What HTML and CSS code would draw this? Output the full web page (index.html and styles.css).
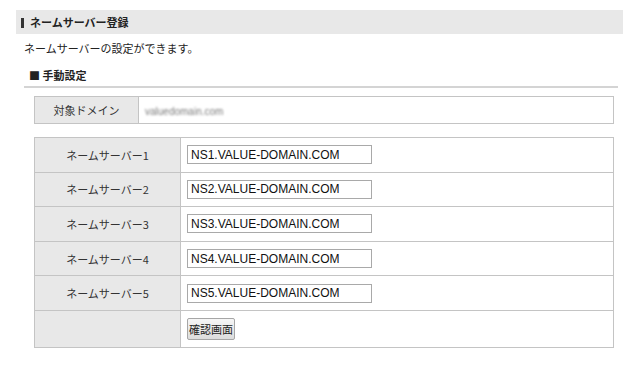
FILE: index.html
```html
<!DOCTYPE html>
<html>

<head>
	<title>ネームサーバー登録</title>
	<link rel="stylesheet" href="styles.css">
</head>

<body>
	<div class="page">
		<h2 class="title">ネームサーバー登録</h2>
		<p class="lead">ネームサーバーの設定ができます。</p>
		<div class="section">
			<h3 class="heading">■ 手動設定</h3>
			<table class="domain">
				<tr>
					<th>対象ドメイン</th>
					<td><span class="blur">valuedomain.com</span></td>
				</tr>
			</table>
			<form name="nsform">
				<table class="ns">
					<tr>
						<th>ネームサーバー1</th>
						<td><input type="text" class="field" value="NS1.VALUE-DOMAIN.COM"></td>
					</tr>
					<tr>
						<th>ネームサーバー2</th>
						<td><input type="text" class="field" value="NS2.VALUE-DOMAIN.COM"></td>
					</tr>
					<tr>
						<th>ネームサーバー3</th>
						<td><input type="text" class="field" value="NS3.VALUE-DOMAIN.COM"></td>
					</tr>
					<tr>
						<th>ネームサーバー4</th>
						<td><input type="text" class="field" value="NS4.VALUE-DOMAIN.COM"></td>
					</tr>
					<tr>
						<th>ネームサーバー5</th>
						<td><input type="text" class="field" value="NS5.VALUE-DOMAIN.COM"></td>
					</tr>
					<tr class="last">
						<th></th>
						<td><input type="button" class="button" value="確認画面"></td>
					</tr>
				</table>
			</form>
		</div>
	</div>
</body>

</html>
```

FILE: styles.css
```css
* {
	margin: 0px;
	padding: 0px;
}

body {
	background: #ffffff;
	color: #222;
	font-family: "Noto Sans CJK JP", "Liberation Sans", sans-serif;
	font-size: 11px;
}

.page {
	padding: 10px 17px 0 16px;
}

.title {
	height: 24px;
	line-height: 24px;
	background: #e8e8e8;
	font-size: 11px;
	font-weight: bold;
	padding-left: 5px;
}

.title::before {
	content: "";
	display: inline-block;
	width: 3px;
	height: 10px;
	background: #333;
	margin-right: 6px;
	vertical-align: -1px;
}

.lead {
	margin: 5px 0 0 8px;
	line-height: 18px;
}

.section {
	margin: 0 5px 0 8px;
}

.heading {
	margin-top: 9px;
	padding: 0 0 2px 5px;
	line-height: 18px;
	font-size: 11px;
	font-weight: bold;
	border-bottom: 2px solid #d4d4d4;
}

table {
	border-collapse: collapse;
	margin-left: 10px;
	width: 580px;
}

th,
td {
	border: 1px solid #c4c4c4;
	font-weight: normal;
}

th {
	background: #e8e8e8;
	text-align: center;
	color: #333;
}

.domain {
	margin-top: 8px;
}

.domain th {
	width: 103px;
	height: 26px;
}

.domain td {
	padding-left: 6px;
}

.blur {
	color: #7a7a7a;
	filter: blur(1.3px);
	font-family: "Liberation Sans", sans-serif;
	font-size: 10px;
}

.ns {
	margin-top: 13px;
}

.ns th {
	width: 145px;
	height: 33.6px;
}

.ns td {
	padding-left: 6px;
}

.ns .last th,
.ns .last td {
	height: 36px;
}

.field {
	width: 185px;
	height: 19px;
	box-sizing: border-box;
	border: 1px solid #a9a9a9;
	padding: 0 3px;
	font-family: "Liberation Sans", sans-serif;
	font-size: 12px;
	color: #111;
	display: block;
}

.button {
	width: 48px;
	height: 22px;
	border: 1px solid #a6a6a6;
	border-radius: 2px;
	background: linear-gradient(#f6f6f6, #dcdcdc);
	font-family: "Noto Sans CJK JP", sans-serif;
	font-size: 11px;
	color: #222;
	display: block;
}
```
